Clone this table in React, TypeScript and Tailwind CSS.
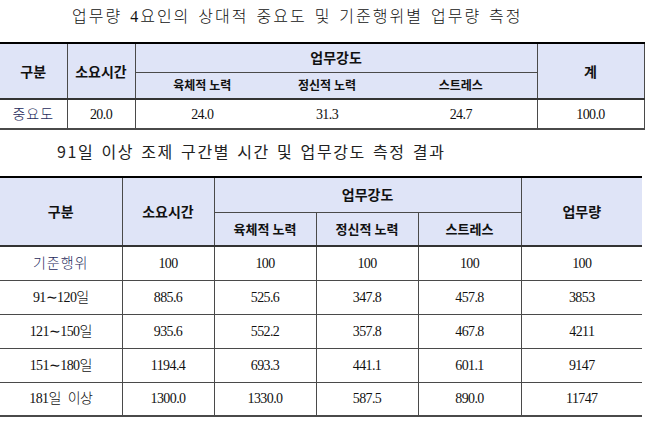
const serif = { fontFamily: '"Liberation Serif", "Noto Sans CJK KR", serif' }

const head = "bg-[#dfe4f7] font-bold text-[#111] text-center align-middle"
const sans = "font-['Noto_Sans_CJK_KR',sans-serif]"
const line = "border-[#4a4a4a]"

const rows2 = [
  { label: "기준행위", navy: true, v: ["100", "100", "100", "100", "100"] },
  { label: "91∼120일", v: ["885.6", "525.6", "347.8", "457.8", "3853"] },
  { label: "121∼150일", v: ["935.6", "552.2", "357.8", "467.8", "4211"] },
  { label: "151∼180일", v: ["1194.4", "693.3", "441.1", "601.1", "9147"] },
  { label: "181일 이상", v: ["1300.0", "1330.0", "587.5", "890.0", "11747"] },
]

export default function App() {
  return (
    <div className="w-[650px] h-[426px] bg-white text-[#111] overflow-hidden">
      <div className="h-[42px] flex items-center pl-[72px] pb-[8px] text-[16px] tracking-[2px] [word-spacing:2px] font-light" style={serif}>
        업무량 4요인의 상대적 중요도 및 기준행위별 업무량 측정
      </div>

      <table className={`w-[644px] table-fixed border-collapse ${sans}`}>
        <colgroup>
          <col className="w-[67px]" />
          <col className="w-[68px]" />
          <col className="w-[134px]" />
          <col className="w-[116px]" />
          <col className="w-[152px]" />
          <col className="w-[107px]" />
        </colgroup>
        <thead>
          <tr className="h-[29px]">
            <th rowSpan={2} className={`${head} text-[14px] border-t-2 border-t-black border-b-2 border-b-[#333] border-r ${line}`}>구분</th>
            <th rowSpan={2} className={`${head} text-[14px] border-t-2 border-t-black border-b-2 border-b-[#333] border-r ${line}`}>소요시간</th>
            <th colSpan={3} className={`${head} text-[14px] border-t-2 border-t-black border-b ${line}`}>업무강도</th>
            <th rowSpan={2} className={`${head} text-[14px] border-t-2 border-t-black border-b-2 border-b-[#333] border-l border-r ${line}`}>계</th>
          </tr>
          <tr className="h-[27px]">
            <th className={`${head} text-[12px] border-b-2 border-b-[#333]`}>육체적 노력</th>
            <th className={`${head} text-[12px] border-b-2 border-b-[#333]`}>정신적 노력</th>
            <th className={`${head} text-[12px] border-b-2 border-b-[#333]`}>스트레스</th>
          </tr>
        </thead>
        <tbody>
          <tr className="h-[30px] text-center text-[14px] tracking-[-0.6px]" style={serif}>
            <td className={`text-[#1e2b5c] font-light tracking-[1px] border-r border-b-2 ${line}`}>중요도</td>
            <td className={`border-r border-b-2 ${line}`}>20.0</td>
            <td className={`border-b-2 ${line}`}>24.0</td>
            <td className={`border-b-2 ${line}`}>31.3</td>
            <td className={`border-b-2 ${line}`}>24.7</td>
            <td className={`border-l border-r border-b-2 ${line}`}>100.0</td>
          </tr>
        </tbody>
      </table>

      <div className={`h-[46px] flex items-center pl-[57px] pb-[4px] text-[16px] tracking-[1.6px] [word-spacing:2px] text-[#222] ${sans}`}>
        91일 이상 조제 구간별 시간 및 업무강도 측정 결과
      </div>

      <table className={`w-[642px] table-fixed border-collapse ${sans}`}>
        <colgroup>
          <col className="w-[122px]" />
          <col className="w-[92px]" />
          <col className="w-[102px]" />
          <col className="w-[102px]" />
          <col className="w-[103px]" />
          <col className="w-[121px]" />
        </colgroup>
        <thead>
          <tr className="h-[35px]">
            <th rowSpan={2} className={`${head} text-[14px] border-t-2 border-t-black border-b-2 border-b-[#333] border-r ${line}`}>구분</th>
            <th rowSpan={2} className={`${head} text-[14px] border-t-2 border-t-black border-b-2 border-b-[#333] border-r ${line}`}>소요시간</th>
            <th colSpan={3} className={`${head} text-[14px] border-t-2 border-t-black border-b ${line}`}>업무강도</th>
            <th rowSpan={2} className={`${head} text-[14px] border-t-2 border-t-black border-b-2 border-b-[#333] border-l ${line}`}>업무량</th>
          </tr>
          <tr className="h-[34px]">
            <th className={`${head} text-[13px] border-b-2 border-b-[#333] border-r ${line}`}>육체적 노력</th>
            <th className={`${head} text-[13px] border-b-2 border-b-[#333] border-r ${line}`}>정신적 노력</th>
            <th className={`${head} text-[13px] border-b-2 border-b-[#333]`}>스트레스</th>
          </tr>
        </thead>
        <tbody>
          {rows2.map((r, i) => (
            <tr key={i} className="h-[34px] text-center text-[14px] tracking-[-0.6px]" style={serif}>
              <td className={`${r.navy ? "text-[#1e2b5c] tracking-[1px]" : "[word-spacing:4px]"} font-light border-r border-b ${line} ${i === rows2.length - 1 ? "border-b-2" : ""}`}>{r.label}</td>
              {r.v.map((v, j) => (
                <td key={j} className={`${j < 4 ? "border-r" : ""} border-b ${line} ${i === rows2.length - 1 ? "border-b-2" : ""}`}>{v}</td>
              ))}
            </tr>
          ))}
        </tbody>
      </table>
    </div>
  )
}
